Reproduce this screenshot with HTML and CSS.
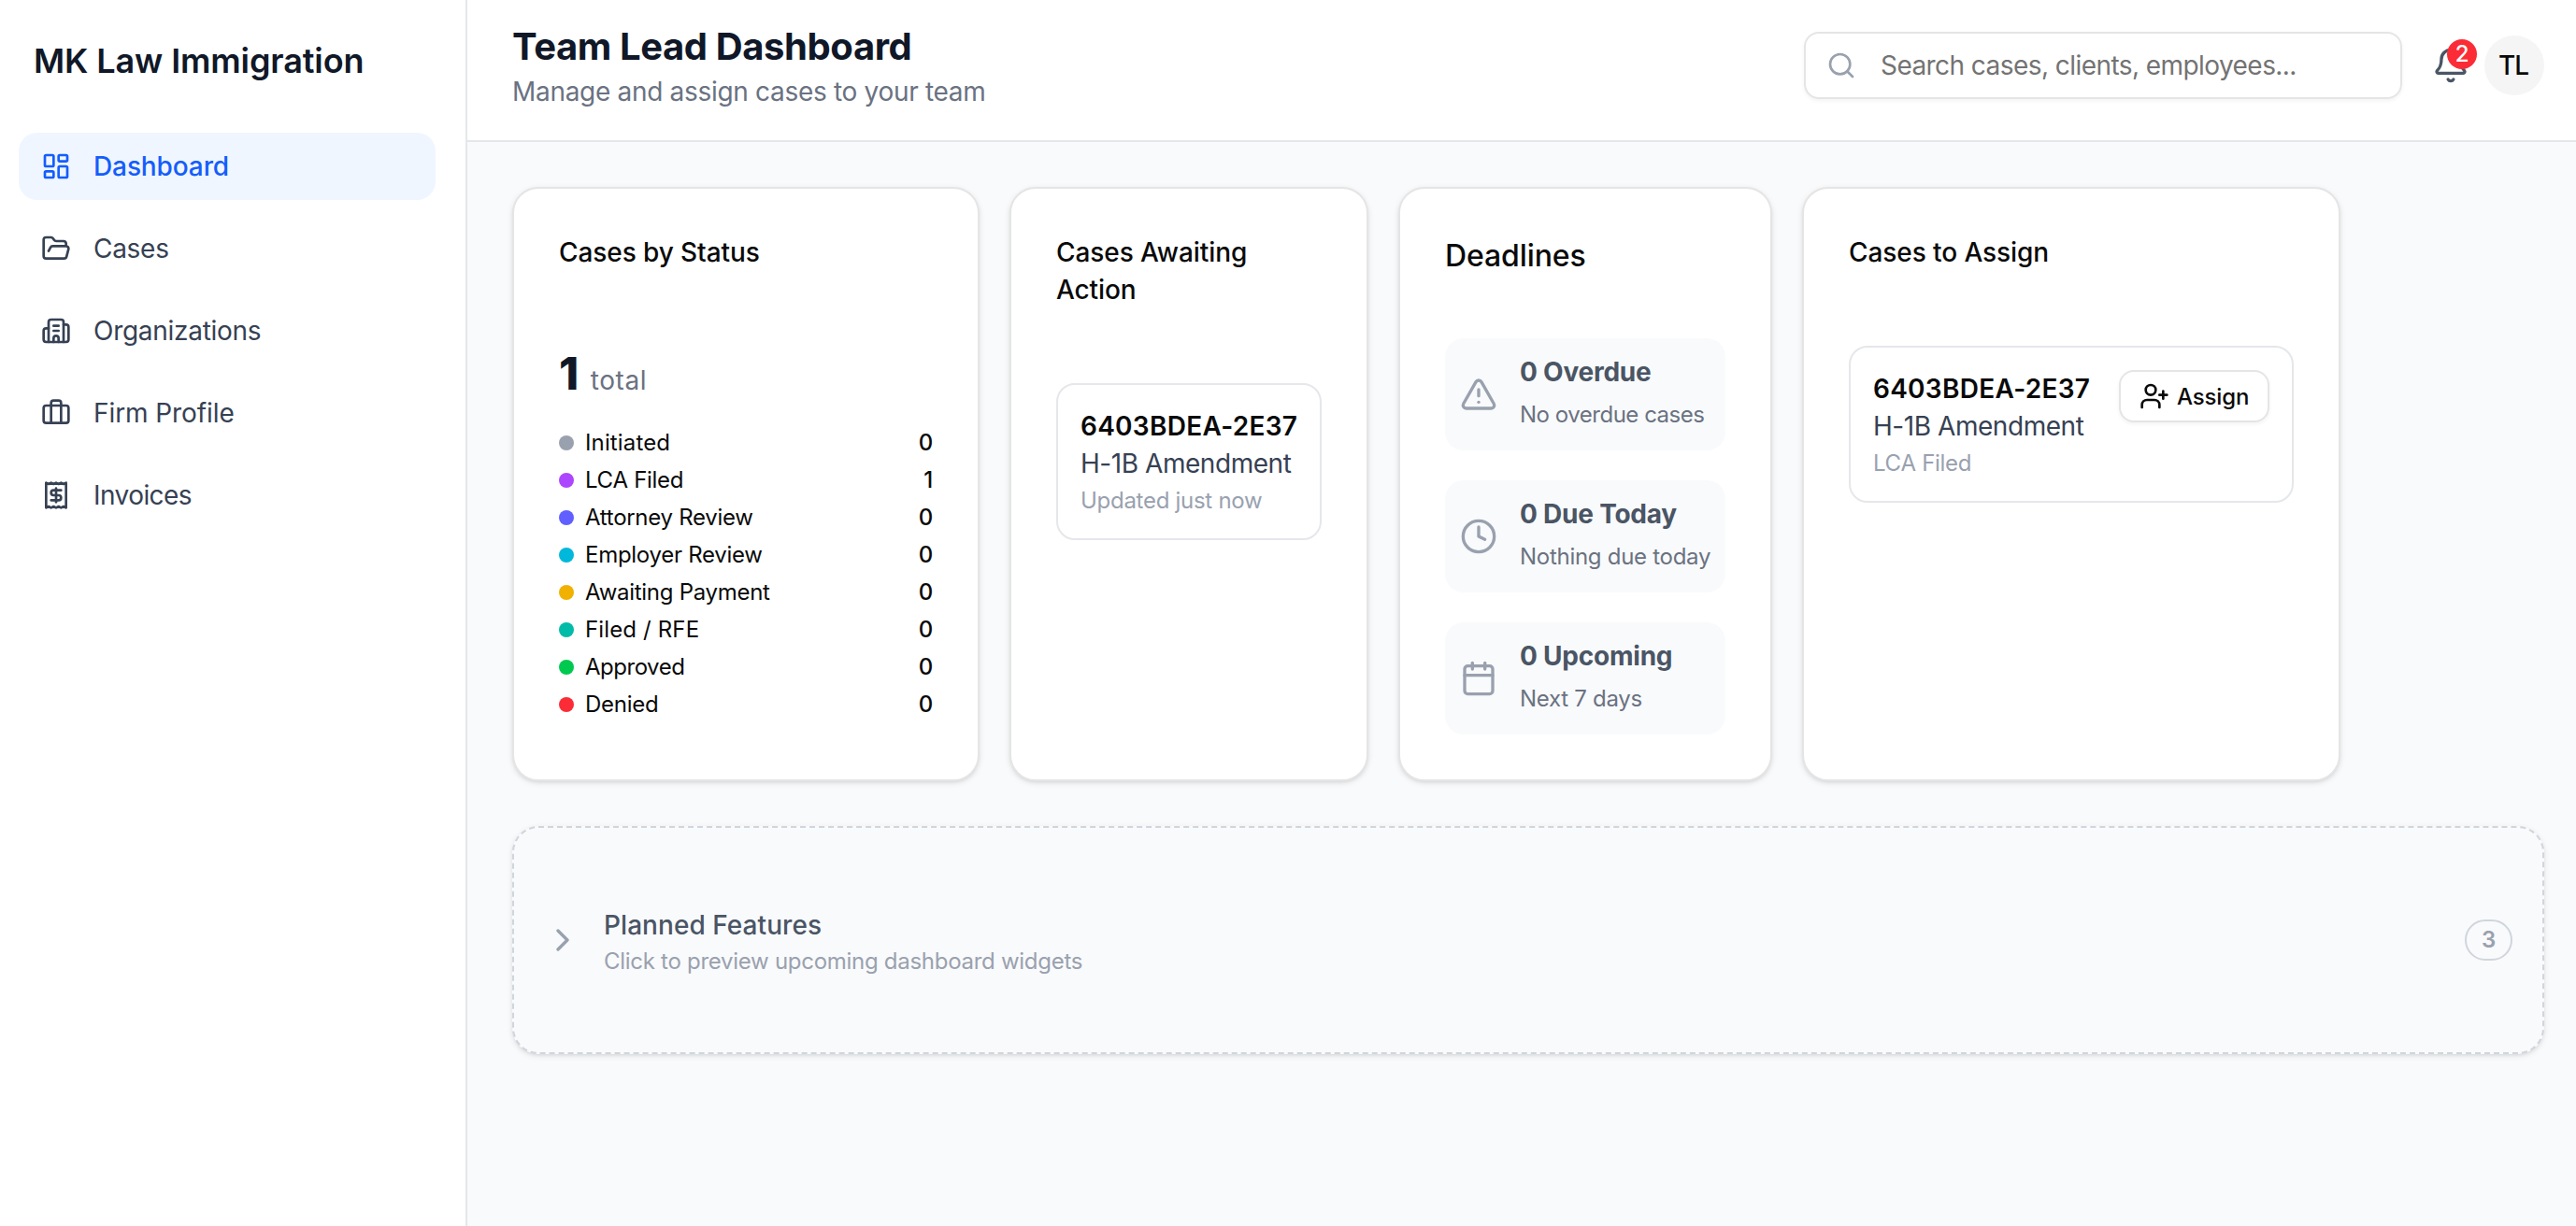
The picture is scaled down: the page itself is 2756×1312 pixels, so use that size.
FILE: index.html
```html
<!DOCTYPE html>
<html lang="en">
<head>
    <meta charset="UTF-8">
    <meta name="viewport" content="width=device-width, initial-scale=1.0">
    <title>Team Lead Dashboard</title>
    <link rel="stylesheet" href="styles.css">
</head>
<body>
    <aside class="sidebar">
        <div class="brand">MK Law Immigration</div>
        <nav class="nav">
            <a href="#" class="nav-item active">
                <svg class="icon" viewBox="0 0 24 24"><rect width="7" height="9" x="3" y="3" rx="1"/><rect width="7" height="5" x="14" y="3" rx="1"/><rect width="7" height="9" x="14" y="12" rx="1"/><rect width="7" height="5" x="3" y="16" rx="1"/></svg>
                <span>Dashboard</span>
            </a>
            <a href="#" class="nav-item">
                <svg class="icon" viewBox="0 0 24 24"><path d="m6 14 1.5-2.9A2 2 0 0 1 9.24 10H20a2 2 0 0 1 1.94 2.5l-1.54 6a2 2 0 0 1-1.95 1.5H4a2 2 0 0 1-2-2V5a2 2 0 0 1 2-2h3.9a2 2 0 0 1 1.69.9l.81 1.2a2 2 0 0 0 1.67.9H18a2 2 0 0 1 2 2v2"/></svg>
                <span>Cases</span>
            </a>
            <a href="#" class="nav-item">
                <svg class="icon" viewBox="0 0 24 24"><path d="M10 12h4"/><path d="M10 8h4"/><path d="M14 21v-3a2 2 0 0 0-4 0v3"/><path d="M6 10H4a2 2 0 0 0-2 2v7a2 2 0 0 0 2 2h16a2 2 0 0 0 2-2V9a2 2 0 0 0-2-2h-2"/><path d="M6 21V5a2 2 0 0 1 2-2h8a2 2 0 0 1 2 2v16"/></svg>
                <span>Organizations</span>
            </a>
            <a href="#" class="nav-item">
                <svg class="icon" viewBox="0 0 24 24"><path d="M16 20V4a2 2 0 0 0-2-2h-4a2 2 0 0 0-2 2v16"/><rect width="20" height="14" x="2" y="6" rx="2"/></svg>
                <span class="normal">Firm Profile</span>
            </a>
            <a href="#" class="nav-item">
                <svg class="icon" viewBox="0 0 24 24"><path d="M4 2v20l2-1 2 1 2-1 2 1 2-1 2 1 2-1 2 1V2l-2 1-2-1-2 1-2-1-2 1-2-1-2 1Z"/><path d="M16 8h-6a2 2 0 1 0 0 4h4a2 2 0 1 1 0 4H8"/><path d="M12 17.5v-11"/></svg>
                <span class="tight">Invoices</span>
            </a>
        </nav>
    </aside>

    <div class="main">
        <header class="header">
            <div>
                <h1>Team Lead Dashboard</h1>
                <p class="subtitle">Manage and assign cases to your team</p>
            </div>
            <div class="header-actions">
                <div class="search">
                    <svg class="icon" viewBox="0 0 24 24"><path d="m21 21-4.34-4.34"/><circle cx="11" cy="11" r="8"/></svg>
                    <span>Search cases, clients, employees...</span>
                </div>
                <div class="bell">
                    <svg class="icon icon-lg" viewBox="0 0 24 24"><path d="M10.268 21a2 2 0 0 0 3.464 0"/><path d="M3.262 15.326A1 1 0 0 0 4 17h16a1 1 0 0 0 .74-1.673C19.41 13.956 18 12.499 18 8A6 6 0 0 0 6 8c0 4.499-1.411 5.956-2.738 7.326"/></svg>
                    <span class="bell-count">2</span>
                </div>
                <div class="avatar">TL</div>
            </div>
        </header>

        <main class="content">
            <div class="cards">
                <section class="card">
                    <h2>Cases by Status</h2>
                    <div class="total"><strong>1</strong><span>total</span></div>
                    <ul class="status-list">
                        <li><i class="dot gray"></i><span class="wide">Initiated</span><b>0</b></li>
                        <li><i class="dot purple"></i><span>LCA Filed</span><b>1</b></li>
                        <li><i class="dot indigo"></i><span>Attorney Review</span><b>0</b></li>
                        <li><i class="dot cyan"></i><span>Employer Review</span><b>0</b></li>
                        <li><i class="dot yellow"></i><span>Awaiting Payment</span><b>0</b></li>
                        <li><i class="dot teal"></i><span class="wide">Filed / RFE</span><b>0</b></li>
                        <li><i class="dot green"></i><span class="tight">Approved</span><b>0</b></li>
                        <li><i class="dot red"></i><span>Denied</span><b>0</b></li>
                    </ul>
                </section>

                <section class="card">
                    <h2>Cases Awaiting Action</h2>
                    <div class="case">
                        <div>
                            <div class="case-number">6403BDEA-2E37</div>
                            <div class="case-type">H-1B Amendment</div>
                            <div class="case-note">Updated just now</div>
                        </div>
                    </div>
                </section>

                <section class="card">
                    <h2 class="large">Deadlines</h2>
                    <div class="deadlines">
                        <div class="deadline">
                            <svg class="icon icon-lg" viewBox="0 0 24 24"><path d="m21.73 18-8-14a2 2 0 0 0-3.48 0l-8 14A2 2 0 0 0 4 21h16a2 2 0 0 0 1.73-3"/><path d="M12 9v4"/><path d="M12 17h.01"/></svg>
                            <div>
                                <h3>0 Overdue</h3>
                                <p class="tight">No overdue cases</p>
                            </div>
                        </div>
                        <div class="deadline">
                            <svg class="icon icon-lg" viewBox="0 0 24 24"><circle cx="12" cy="12" r="10"/><path d="M12 6v6l4 2"/></svg>
                            <div>
                                <h3>0 Due Today</h3>
                                <p>Nothing due today</p>
                            </div>
                        </div>
                        <div class="deadline">
                            <svg class="icon icon-lg" viewBox="0 0 24 24"><path d="M8 2v4"/><path d="M16 2v4"/><rect width="18" height="18" x="3" y="4" rx="2"/><path d="M3 10h18"/></svg>
                            <div>
                                <h3>0 Upcoming</h3>
                                <p>Next 7 days</p>
                            </div>
                        </div>
                    </div>
                </section>

                <section class="card">
                    <h2>Cases to Assign</h2>
                    <div class="case">
                        <div>
                            <div class="case-number">6403BDEA-2E37</div>
                            <div class="case-type">H-1B Amendment</div>
                            <div class="case-note">LCA Filed</div>
                        </div>
                        <button class="assign">
                            <svg class="icon" viewBox="0 0 24 24"><path d="M16 21v-2a4 4 0 0 0-4-4H6a4 4 0 0 0-4 4v2"/><circle cx="9" cy="7" r="4"/><path d="M19 8v6"/><path d="M22 11h-6"/></svg>
                            Assign
                        </button>
                    </div>
                </section>
            </div>

            <section class="planned">
                <svg class="icon icon-lg" viewBox="0 0 24 24"><path d="m9 18 6-6-6-6"/></svg>
                <div class="planned-text">
                    <h3>Planned Features</h3>
                    <p>Click to preview upcoming dashboard widgets</p>
                </div>
                <span class="planned-count">3</span>
            </section>
        </main>
    </div>
</body>
</html>
```
FILE: styles.css
```css
* {
    box-sizing: border-box;
    margin: 0;
    padding: 0;
}

body {
    display: flex;
    min-height: 100vh;
    font-family: Inter, "Liberation Sans", sans-serif;
    font-size: 28px;
    line-height: 40px;
    letter-spacing: -0.01em;
    background-color: #f9fafb;
    color: #0a0a0a;
}

.icon {
    width: 32px;
    height: 32px;
    flex-shrink: 0;
    fill: none;
    stroke: currentColor;
    stroke-width: 2;
    stroke-linecap: round;
    stroke-linejoin: round;
}

.icon-lg {
    width: 40px;
    height: 40px;
}

.normal {
    letter-spacing: -0.003em;
}

.wide {
    letter-spacing: 0.006em;
}

.tight {
    letter-spacing: -0.02em;
}

/* Sidebar */
.sidebar {
    width: 500px;
    flex-shrink: 0;
    padding: 37px 32px 0 20px;
    background: white;
    border-right: 2px solid #e5e7eb;
}

.brand {
    padding-left: 16px;
    margin-bottom: 49px;
    font-size: 36px;
    line-height: 56px;
    font-weight: 600;
    letter-spacing: -0.003em;
    color: #101828;
}

.nav {
    display: flex;
    flex-direction: column;
    gap: 16px;
}

.nav-item {
    display: flex;
    align-items: center;
    gap: 24px;
    height: 72px;
    padding: 0 24px;
    border-radius: 20px;
    color: #364153;
    text-decoration: none;
}

.nav-item.active {
    background: #eff6ff;
    color: #155dfc;
    font-weight: 500;
    letter-spacing: -0.004em;
}

/* Header */
.main {
    flex: 1;
    min-width: 0;
}

.header {
    display: flex;
    justify-content: space-between;
    height: 152px;
    padding: 22px 34px 0 48px;
    background: white;
    border-bottom: 2px solid #e5e7eb;
}

h1 {
    font-size: 40px;
    line-height: 56px;
    font-weight: 700;
    letter-spacing: -0.01em;
    color: #101828;
}

.subtitle {
    letter-spacing: -0.011em;
    color: #6a7282;
}

.header-actions {
    display: flex;
    align-items: center;
    height: 96px;
}

.search {
    display: flex;
    align-items: center;
    gap: 26px;
    width: 640px;
    height: 72px;
    margin-right: 32px;
    padding: 0 22px;
    border: 2px solid #e5e5e5;
    border-radius: 16px;
    box-shadow: 0 2px 4px rgba(0, 0, 0, 0.05);
    color: #737373;
    letter-spacing: -0.02em;
}

.search .icon {
    color: #99a1af;
}

.bell {
    position: relative;
    height: 40px;
    margin-right: 16px;
    color: #4a5565;
}

.bell .icon {
    display: block;
}

.bell-count {
    position: absolute;
    top: -8px;
    right: -8px;
    width: 32px;
    height: 32px;
    border-radius: 50%;
    background: #fb2c36;
    color: white;
    font-size: 24px;
    line-height: 32px;
    font-weight: 500;
    text-align: center;
}

.avatar {
    width: 64px;
    height: 64px;
    padding-right: 2px;
    border-radius: 50%;
    background: #f5f5f5;
    font-weight: 500;
    line-height: 64px;
    letter-spacing: -0.04em;
    text-align: center;
}

/* Cards */
.content {
    padding: 48px 34px 48px 48px;
}

.cards {
    display: grid;
    grid-template-columns: 500px 384px 400px 576px;
    gap: 32px;
    height: 636px;
    margin-bottom: 48px;
}

.card {
    padding: 48px;
    background: white;
    border: 2px solid #e5e5e5;
    border-radius: 28px;
    box-shadow: 0 2px 6px rgba(0, 0, 0, 0.1), 0 2px 4px -2px rgba(0, 0, 0, 0.1);
}

.card h2 {
    margin-bottom: 80px;
    font-size: 28px;
    font-weight: 500;
    letter-spacing: -0.003em;
}

.card h2.large {
    margin-bottom: 64px;
    font-size: 32px;
    line-height: 48px;
}

.total {
    display: flex;
    align-items: baseline;
    gap: 14px;
    height: 60px;
    margin-bottom: 28px;
    line-height: 60px;
    color: #6a7282;
    letter-spacing: 0.02em;
}

.total strong {
    font-size: 48px;
    font-weight: 800;
    letter-spacing: -0.03em;
    color: #101828;
}

.status-list {
    display: flex;
    flex-direction: column;
    gap: 8px;
    list-style: none;
    font-size: 24px;
    line-height: 32px;
}

.status-list li {
    display: flex;
    align-items: center;
}

.status-list b {
    margin-left: auto;
    font-weight: 500;
}

.dot {
    width: 16px;
    height: 16px;
    margin-right: 12px;
    border-radius: 50%;
}

.gray { background: #99a1af; }
.purple { background: #ad46ff; }
.indigo { background: #615fff; }
.cyan { background: #00b8db; }
.yellow { background: #f0b100; }
.teal { background: #00bba7; }
.green { background: #00c950; }
.red { background: #fb2c36; }

.case {
    display: flex;
    justify-content: space-between;
    align-items: flex-start;
    height: 168px;
    padding: 24px;
    border: 2px solid #e5e7eb;
    border-radius: 20px;
    white-space: nowrap;
}

.case-number {
    font-weight: 600;
    letter-spacing: 0.01em;
}

.case-type {
    color: #364153;
    letter-spacing: -0.016em;
}

.case-note {
    margin-top: 4px;
    font-size: 24px;
    line-height: 32px;
    color: #99a1af;
}

.assign {
    display: flex;
    align-items: center;
    gap: 8px;
    width: 161px;
    height: 56px;
    padding: 0 18px 0 20px;
    background: white;
    border: 2px solid #e5e5e5;
    border-radius: 16px;
    box-shadow: 0 2px 4px rgba(0, 0, 0, 0.05);
    color: #0a0a0a;
    font-family: inherit;
    font-size: 24px;
    font-weight: 500;
    letter-spacing: -0.006em;
}

.deadlines {
    display: flex;
    flex-direction: column;
    gap: 32px;
}

.deadline {
    display: flex;
    align-items: center;
    gap: 24px;
    height: 120px;
    padding: 0 16px;
    background: #f9fafb;
    border-radius: 20px;
    color: #99a1af;
    white-space: nowrap;
}

.deadline h3 {
    font-size: 28px;
    font-weight: 700;
    letter-spacing: -0.008em;
    color: #4a5565;
}

.deadline p {
    padding: 8px 0 4px;
    font-size: 24px;
    line-height: 36px;
    color: #6a7282;
}

/* Planned features */
.planned {
    display: flex;
    align-items: center;
    gap: 24px;
    height: 244px;
    padding: 0 32px;
    background: #f9fafb;
    border: 2px dashed #d1d5dc;
    border-radius: 28px;
    box-shadow: 0 2px 6px rgba(0, 0, 0, 0.1), 0 2px 4px -2px rgba(0, 0, 0, 0.1);
    color: #99a1af;
}

.planned h3 {
    font-size: 28px;
    font-weight: 500;
    letter-spacing: 0.002em;
    color: #4a5565;
}

.planned p {
    margin-top: 3px;
    font-size: 24px;
    line-height: 32px;
}

.planned-text {
    flex: 1;
    padding-top: 3px;
}

.planned-count {
    width: 51px;
    height: 44px;
    border: 2px solid #d1d5dc;
    border-radius: 22px;
    font-size: 24px;
    font-weight: 600;
    line-height: 40px;
    text-align: center;
}
```
